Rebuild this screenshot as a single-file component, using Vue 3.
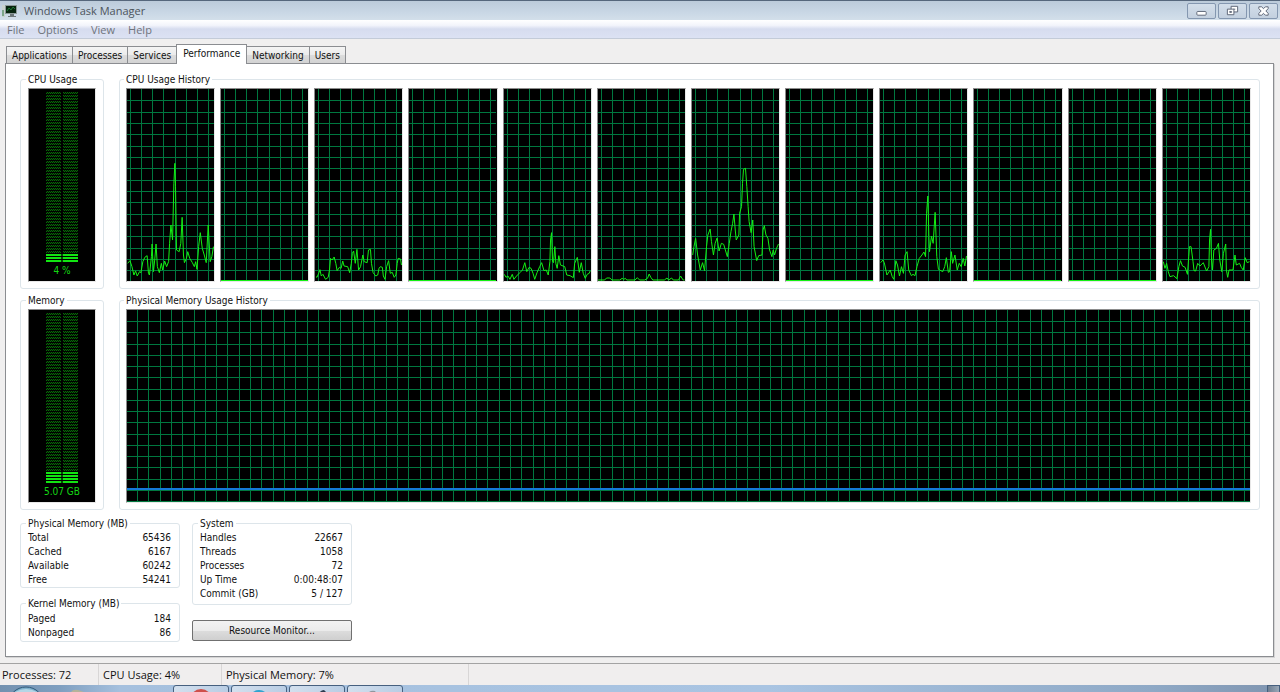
<script setup>
import { ref } from 'vue'

const menus = ['File', 'Options', 'View', 'Help']
const tabs = ['Applications', 'Processes', 'Services', 'Performance', 'Networking', 'Users']
const activeTab = ref('Performance')

const idle = '0,574 264,574'

// one load curve per core, on a 264 x 576 canvas
const cores = [
  '2,523 9,515 15,533 21,558 26,546 31,561 38,548 42,551 48,518 54,505 61,500 65,553 68,558 74,503 76,465 80,548 84,513 88,465 92,533 98,551 104,523 108,543 114,516 120,533 126,518 129,463 133,408 138,453 142,283 145,223 147,293 150,483 158,488 163,463 167,385 171,498 174,521 180,508 184,488 190,508 198,521 204,533 208,518 212,541 217,473 222,431 228,478 234,498 240,521 246,408 252,518 257,503 262,473',
  idle,
  '3,563 6,565 12,551 15,542 19,561 24,556 32,571 40,565 44,543 47,508 52,513 58,504 63,523 67,545 74,535 79,538 84,516 88,531 99,533 105,551 110,523 113,493 117,486 122,523 127,481 132,543 138,533 145,498 149,518 158,521 162,483 168,481 171,523 176,551 184,561 190,558 194,538 198,533 204,535 207,561 212,571 217,533 223,515 228,553 234,550 240,565 245,558 249,523 252,508 259,510 262,528',
  idle,
  '1,556 6,565 12,561 18,571 25,556 30,571 38,561 48,551 56,543 63,521 69,548 76,535 82,538 88,553 93,571 100,551 108,533 114,521 121,545 128,543 134,558 139,518 141,453 144,431 147,518 150,521 154,473 157,523 161,538 166,500 171,528 184,533 190,558 200,560 210,566 214,523 222,505 228,550 234,521 240,553 246,568 252,556 258,553 261,546',
  '0,573 20,573 26,567 36,567 42,573 66,573 73,568 78,571 83,568 87,573 112,573 119,566 126,573 141,573 150,568 155,555 160,565 166,573 201,573 209,567 214,573 223,567 228,573 244,573 250,561 258,573 262,573',
  '2,498 6,473 11,448 17,498 25,543 32,521 38,545 44,473 48,438 55,420 59,458 65,498 70,463 76,447 82,486 89,463 96,466 101,483 107,503 113,463 118,428 123,403 127,375 131,423 134,453 142,438 144,373 150,353 153,283 156,241 162,238 166,293 170,353 173,398 179,431 184,393 188,473 196,515 202,500 212,498 215,423 219,410 224,438 230,448 235,483 242,503 246,483 250,498 256,478 262,465',
  idle,
  '2,521 9,513 13,521 21,558 31,543 37,563 42,571 48,515 53,528 59,561 65,533 71,553 76,498 82,488 87,543 95,560 100,556 106,560 112,533 119,508 127,498 133,489 138,503 141,373 145,321 148,443 150,488 156,441 161,463 167,370 172,503 177,541 190,548 196,533 201,506 207,550 211,548 216,488 220,523 227,498 234,543 240,523 246,533 252,508 257,531 262,501',
  idle,
  idle,
  '1,518 6,538 11,523 16,548 21,563 32,560 42,569 48,533 53,515 59,531 67,535 74,556 78,503 80,473 85,473 91,518 94,545 99,546 105,523 112,531 122,521 132,546 139,533 141,453 144,421 147,513 150,543 154,483 162,478 168,463 172,513 178,548 183,493 190,465 192,543 196,565 200,543 212,543 218,498 222,528 232,523 237,535 243,543 249,506 255,521 262,518'
]

const coreColumns = [10, 44, 78, 112, 146, 180, 214, 248]
const rows = Array.from({ length: 16 }, (_, i) => 35 + i * 34)
const memoryColumns = Array.from({ length: 99 }, (_, i) => Math.round(11 + i * 11.3))
const memoryRows = Array.from({ length: 17 }, (_, i) => Math.round(11 + i * 11.25))

const meterRows = 57

const physical = [
  ['Total', '65436'],
  ['Cached', '6167'],
  ['Available', '60242'],
  ['Free', '54241']
]
const kernel = [
  ['Paged', '184'],
  ['Nonpaged', '86']
]
const system = [
  ['Handles', '22667'],
  ['Threads', '1058'],
  ['Processes', '72'],
  ['Up Time', '0:00:48:07'],
  ['Commit (GB)', '5 / 127']
]
</script>

<template>
  <div class="desktop">
    <header class="titlebar">
      <svg class="app-icon" viewBox="0 0 16 16" aria-hidden="true">
        <rect x="1" y="2" width="3" height="12" fill="#c9d2cf" />
        <rect x="1" y="7" width="2" height="6" fill="#7da68a" />
        <rect x="4" y="2" width="12" height="9" fill="#8d9a9a" />
        <rect x="5" y="3" width="10" height="7" fill="#07240f" />
        <path d="M6 8l2-3 2 2 2-3 2 2" fill="none" stroke="#1e7a35" />
        <path d="M9 11h4v2h2v1H7v-1h2z" fill="#6d7779" />
      </svg>
      <h1>Windows Task Manager</h1>
      <div class="window-buttons">
        <button type="button" aria-label="Minimize">
          <svg viewBox="0 0 28 15"><rect x="9" y="8" width="10" height="4" rx="1" fill="#fff" stroke="#596273" /></svg>
        </button>
        <button type="button" aria-label="Restore">
          <svg viewBox="0 0 28 15">
            <path d="M12.500 2.500h7v6h-7z" fill="#fff" stroke="#596273" />
            <path d="M15 5h2v1h-2z" fill="#596273" />
            <path d="M8.500 5.500h7v6h-7z" fill="#fff" stroke="#596273" />
            <path d="M11 8h2v1h-2z" fill="#fff" stroke="#596273" />
          </svg>
        </button>
        <button type="button" aria-label="Close">
          <svg viewBox="0 0 28 15">
            <path d="M9 3h3l2 2 2-2h3v2l-2.500 2.500L19 10v2h-3l-2-2-2 2H9v-2l2.500-2.500L9 5z" fill="#fff" stroke="#596273" />
          </svg>
        </button>
      </div>
    </header>

    <nav class="menubar">
      <button v-for="m in menus" :key="m" type="button">{{ m }}</button>
    </nav>

    <main>
      <div class="tabs" role="tablist">
        <button
          v-for="t in tabs"
          :key="t"
          type="button"
          role="tab"
          :aria-selected="t === activeTab"
          :class="{ active: t === activeTab }"
          @click="activeTab = t"
        >{{ t }}</button>
      </div>

      <section class="panel">
        <div class="monitor">
          <fieldset>
            <legend>CPU Usage</legend>
            <div class="meter">
              <div class="bars">
                <i v-for="n in meterRows" :key="n" :class="{ lit: n > meterRows - 3 }"></i>
              </div>
              <span>4 %</span>
            </div>
          </fieldset>
          <fieldset class="history">
            <legend>CPU Usage History</legend>
            <div class="cores">
              <svg v-for="(points, i) in cores" :key="i" class="chart" viewBox="0 0 264 576" preserveAspectRatio="none">
                <g class="grid">
                  <line v-for="x in coreColumns" :key="'x' + x" :x1="x" y1="0" :x2="x" y2="576" />
                  <line v-for="y in rows" :key="'y' + y" x1="0" :y1="y" x2="264" :y2="y" />
                </g>
                <polyline class="load" :class="{ idle: points === idle }" :points="points" />
              </svg>
            </div>
          </fieldset>
        </div>

        <div class="monitor">
          <fieldset>
            <legend>Memory</legend>
            <div class="meter">
              <div class="bars">
                <i v-for="n in meterRows" :key="n" :class="{ lit: n > meterRows - 4 }"></i>
              </div>
              <span>5.07 GB</span>
            </div>
          </fieldset>
          <fieldset class="history">
            <legend>Physical Memory Usage History</legend>
            <svg class="chart" viewBox="0 0 1124 192" preserveAspectRatio="none">
              <g class="grid">
                <line v-for="x in memoryColumns" :key="'x' + x" :x1="x" y1="0" :x2="x" y2="192" />
                <line v-for="y in memoryRows" :key="'y' + y" x1="0" :y1="y" x2="1124" :y2="y" />
              </g>
              <line class="memory" x1="0" y1="179" x2="1124" y2="179" />
            </svg>
          </fieldset>
        </div>

        <div class="details">
          <div class="column">
            <fieldset>
              <legend>Physical Memory (MB)</legend>
              <table>
                <tbody>
                  <tr v-for="r in physical" :key="r[0]"><th scope="row">{{ r[0] }}</th><td>{{ r[1] }}</td></tr>
                </tbody>
              </table>
            </fieldset>
            <fieldset class="kernel">
              <legend>Kernel Memory (MB)</legend>
              <table>
                <tbody>
                  <tr v-for="r in kernel" :key="r[0]"><th scope="row">{{ r[0] }}</th><td>{{ r[1] }}</td></tr>
                </tbody>
              </table>
            </fieldset>
          </div>
          <div class="column">
            <fieldset class="system">
              <legend>System</legend>
              <table>
                <tbody>
                  <tr v-for="r in system" :key="r[0]"><th scope="row">{{ r[0] }}</th><td>{{ r[1] }}</td></tr>
                </tbody>
              </table>
            </fieldset>
            <button type="button" class="resource">Resource Monitor...</button>
          </div>
        </div>
      </section>
    </main>

    <footer class="status">
      <span class="processes">Processes: 72</span>
      <span class="cpu">CPU Usage: 4%</span>
      <span class="physical">Physical Memory: 7%</span>
    </footer>

    <div class="taskbar">
      <svg class="start" viewBox="0 0 171 7" aria-hidden="true">
        <circle cx="26" cy="20" r="18" fill="#7fb0cc" stroke="#2f5878" />
        <path d="M15 7q11-6 22 0z" fill="#b4d6e6" />
        <path d="M71 7q2-3 7-2l6 2z" fill="#b5b39a" />
      </svg>
      <button type="button" aria-label="Chrome">
        <svg viewBox="0 0 54 10"><circle cx="27" cy="14" r="11" fill="#cf4f4b" /></svg>
      </button>
      <button type="button" aria-label="Browser">
        <svg viewBox="0 0 54 10"><circle cx="27" cy="14" r="10" fill="#2fa3cf" /></svg>
      </button>
      <button type="button" aria-label="Steam">
        <svg viewBox="0 0 54 10"><path d="M28 8q3-4 6-4l4 4z" fill="#2b3a4e" /></svg>
      </button>
      <button type="button" aria-label="Task Manager">
        <svg viewBox="0 0 54 10"><path d="M19 8q3-4 8-3l2 3z" fill="#8f979f" /></svg>
      </button>
      <button type="button" class="show-desktop" aria-label="Show desktop"></button>
    </div>
  </div>
</template>

<style>
body {
  margin: 0;
  background: #f0f0f0;
}
</style>

<style scoped>
.desktop {
  display: flex;
  flex-direction: column;
  min-height: 100vh;
  font-family: 'DejaVu Sans Condensed', 'DejaVu Sans', sans-serif;
  font-size: 10px;
  line-height: 14px;
  color: #111;
  background: #f0efef;
}
button {
  font: inherit;
  color: inherit;
  padding: 0;
  margin: 0;
  border: 0;
  background: none;
}
svg {
  display: block;
}
.titlebar {
  display: flex;
  align-items: center;
  height: 20px;
  box-sizing: border-box;
  border-top: 1px solid #56677c;
  background: linear-gradient(#bccbda, #c9d7e5 60%, #d3dfea);
}
.app-icon {
  width: 16px;
  height: 16px;
  margin-left: 1px;
}
h1 {
  margin: 0 0 0 7px;
  font: 11px/16px 'Open Sans', sans-serif;
  color: #4d545c;
}
.window-buttons {
  display: flex;
  gap: 2px;
  margin-left: auto;
  margin-right: 2px;
}
.window-buttons button {
  width: 29px;
  height: 16px;
  box-sizing: border-box;
  border: 1px solid #8497b0;
  border-radius: 2px;
  background: linear-gradient(#d3deea, #c3d0df);
}
.window-buttons svg {
  width: 100%;
  height: 14px;
}
.menubar {
  display: flex;
  gap: 13px;
  height: 19px;
  box-sizing: border-box;
  padding-left: 7px;
  border-bottom: 1px solid #c3cbd8;
  background: linear-gradient(#fff, #f2f4fb 30%, #d6dcef 50%, #dce2f3);
  font: 11px/20px 'Open Sans', sans-serif;
  color: #6f747c;
}
main {
  flex: 1;
  display: flex;
  flex-direction: column;
  padding: 5px 6px 6px 5px;
}
.tabs {
  display: flex;
  align-items: flex-end;
  height: 19px;
  padding-left: 1px;
}
.tabs button {
  height: 17px;
  padding: 1px 5px 0;
  border: 1px solid #8b8d91;
  border-bottom: 0;
  margin-right: -1px;
  background: linear-gradient(#f4f4f4, #ebebeb 50%, #dcdcdc 50%, #d3d3d3);
}
.tabs .active {
  height: 20px;
  padding: 0 6px 2px;
  margin-bottom: -1px;
  position: relative;
  background: #fff;
}
.panel {
  flex: 1;
  padding: 7px 13px 12px 14px;
  border: 1px solid #8b8d91;
  background: #fff;
  box-shadow: 1px 1px #d5d5d5;
}
fieldset {
  min-width: 0;
  margin: 0;
  padding: 1px 7px 6px;
  border: 1px solid #dde5ea;
  border-radius: 3px;
}
legend {
  margin-left: -2px;
  padding: 2px 2px 0;
  line-height: 14px;
  white-space: nowrap;
}
.monitor {
  display: flex;
  gap: 15px;
  margin-bottom: 3px;
}
.history {
  flex: 1;
  padding-left: 6px;
  padding-right: 8px;
}
.meter {
  display: flex;
  flex-direction: column;
  align-items: center;
  width: 66px;
  height: 192px;
  border: 1px solid #8c8c8c;
  border-right-color: #e8e8e8;
  border-bottom-color: #e8e8e8;
  background: #000;
  color: #13d813;
}
.bars {
  display: flex;
  flex-direction: column;
  width: 32px;
  gap: 1px;
  margin: 3px 0 2px;
}
.bars i {
  height: 2px;
  background:
    linear-gradient(90deg, transparent 15px, #000 15px, #000 17px, transparent 17px),
    repeating-conic-gradient(#086808 0 25%, #001a00 0 50%) 0 0 / 2px 2px;
}
.bars .lit {
  background: linear-gradient(90deg, #12e512 15px, #064a06 15px, #064a06 17px, #12e512 17px);
}
.cores {
  display: grid;
  grid-template-columns: repeat(12, 1fr);
  gap: 5px;
}
.chart {
  width: 100%;
  height: 194px;
  box-sizing: border-box;
  border: 1px solid #8c8c8c;
  border-right-color: #e8e8e8;
  border-bottom-color: #e8e8e8;
  background: #000;
}
.grid {
  stroke: #00783f;
  shape-rendering: crispEdges;
}
.grid line,
.load,
.memory {
  vector-effect: non-scaling-stroke;
}
.load {
  fill: none;
  stroke: #14f014;
}
.load.idle {
  shape-rendering: crispEdges;
}
.memory {
  stroke: #1478d8;
  stroke-width: 2px;
  shape-rendering: crispEdges;
}
.details {
  display: flex;
  align-items: flex-start;
  gap: 12px;
  padding-top: 2px;
}
.column {
  display: flex;
  flex-direction: column;
  gap: 7px;
  width: 160px;
}
.column fieldset {
  padding: 0 7px;
}
.column .kernel {
  padding-top: 1px;
  padding-bottom: 1px;
}
.column .system {
  padding-bottom: 3px;
}
table {
  width: 100%;
  border-collapse: collapse;
}
th,
td {
  padding: 0;
  font-weight: normal;
  text-align: left;
}
td {
  padding-right: 1px;
  text-align: right;
}
.resource {
  height: 21px;
  margin-top: 8px;
  border: 1px solid #707070;
  border-radius: 2px;
  background: linear-gradient(#f2f2f2, #ebebeb 50%, #dddddd 50%, #cfcfcf);
}
.status {
  display: flex;
  height: 22px;
  box-sizing: border-box;
  border-top: 1px solid #a3a3a3;
  background: #f0eeee;
  font: 11px/22px 'Open Sans', sans-serif;
  color: #111;
}
.status span {
  box-sizing: border-box;
  padding-left: 4px;
  border-right: 1px solid #d8d6d6;
}
.status .processes {
  width: 99px;
  padding-left: 2px;
}
.status .cpu {
  width: 123px;
}
.status .physical {
  width: 247px;
}
.taskbar {
  display: flex;
  height: 7px;
  overflow: hidden;
  gap: 2px;
  background: linear-gradient(90deg, #7391b0, #7f9fc0 60px, #a5c0de 120px, #a9c4e2 60%, #8fa9c6 90%, #8095b0);
}
.taskbar .start {
  width: 171px;
  height: 7px;
}
.taskbar button {
  width: 56px;
  height: 12px;
  box-sizing: border-box;
  border: 1px solid #46607f;
  border-radius: 3px;
  background: linear-gradient(90deg, #d3e0ee, #b9cde4);
}
.taskbar button svg {
  width: 54px;
  height: 10px;
}
.taskbar .show-desktop {
  width: 13px;
  margin-left: auto;
  border-radius: 0;
  background: linear-gradient(90deg, #6f7f92, #9aa8b8);
}
</style>
